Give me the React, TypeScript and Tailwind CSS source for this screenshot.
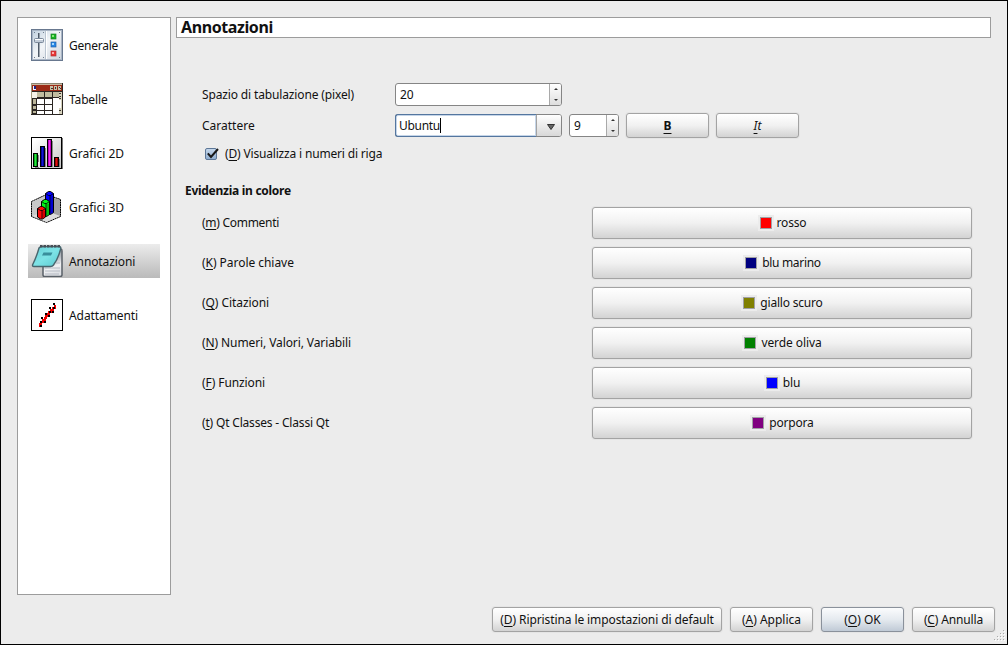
import React, { ReactNode } from 'react';

function GeneralIcon() {
  return (
    <svg width="32" height="32" viewBox="0 0 32 32">
      <defs>
        <linearGradient id="gPanel" x1="0" y1="0" x2="1" y2="1">
          <stop offset="0" stopColor="#c3d2e0" />
          <stop offset=".45" stopColor="#f2f5f8" />
          <stop offset="1" stopColor="#cfd6de" />
        </linearGradient>
      </defs>
      <rect x=".5" y=".5" width="31" height="31" fill="#a9b5c5" stroke="#68788f" />
      <rect x="2" y="2" width="28" height="28" fill="url(#gPanel)" />
      <rect x="15" y="2" width="1" height="28" fill="#fff" />
      <rect x="14" y="2" width="1" height="28" fill="#b9c4d0" />
      <path d="M3 3h1v1H3zM28 3h1v1h-1zM3 28h1v1H3zM28 28h1v1h-1zM12 3h1v1h-1zM12 28h1v1h-1z" fill="#6f7d8d" />
      <rect x="7" y="4" width="1.500" height="24" fill="#4e5a68" />
      <rect x="3.500" y="9.500" width="9" height="4" rx="1" fill="#c2ccd8" stroke="#7b899b" />
      <rect x="4" y="10" width="8" height="1" fill="#fff" />
      <rect x="20" y="5" width="5" height="5" fill="#18b323" stroke="#197b28" strokeWidth=".7" />
      <rect x="21" y="6" width="2" height="2" fill="#86ec78" />
      <rect x="20" y="13" width="5" height="5" fill="#2587e8" stroke="#2462a5" strokeWidth=".7" />
      <rect x="21" y="14" width="2" height="2" fill="#a2d9ff" />
      <rect x="20" y="22" width="5" height="5" fill="#ec3535" stroke="#ad3036" strokeWidth=".7" />
      <rect x="21" y="23" width="2" height="2" fill="#ffaaaa" />
    </svg>
  );
}

function TableIcon() {
  return (
    <svg width="32" height="32" viewBox="0 0 32 32" shapeRendering="crispEdges">
      <rect width="32" height="32" fill="#2a2522" />
      <rect width="31" height="1" fill="#8d8473" />
      <rect y="1" width="31" height="1" fill="#c9b8a1" />
      <rect width="1" height="31" fill="#a09b80" />
      <rect x="1" y="2" width="30" height="6" fill="#9c2b16" />
      <rect x="2" y="3" width="3" height="4" fill="#f4f4ff" />
      <rect x="3" y="3" width="2" height="3" fill="#202080" />
      <path d="M19 3h3v4h-3zM23 3h3v4h-3zM27 3h3v4h-3z" fill="#c5c0a9" />
      <path d="M20 5h2v1h-2zM24 4h1v2h-1zM28 4h1v1h-1zM29 5h1v1h-1z" fill="#40342c" />
      <path d="M1 9h5v6H1z" fill="#f4f3e8" />
      <path d="M6 9h7v5H6zM14 9h7v5h-7zM22 9h6v5h-6z" fill="#c0bc9f" />
      <path d="M2 16h3v5H2zM2 23h3v3H2zM2 28h3v2H2z" fill="#bcb79b" />
      <path d="M6 16h7v5H6zM14 16h7v5h-7zM6 22h7v5H6zM14 22h7v5h-7zM6 28h7v3H6zM14 28h7v3h-7z" fill="#fff" />
      <path d="M22 15h6v16h-6z" fill="#fff" />
      <rect x="28" y="9" width="3" height="22" fill="#d6d2bc" />
      <path d="M28 10h2v1h-2zM28 13h2v1h-2zM28 15h2v1h-2zM28 27h2v1h-2z" fill="#3a352e" />
      <rect x="28" y="17" width="2" height="8" fill="#fff" />
    </svg>
  );
}

function BarsIcon() {
  return (
    <svg width="32" height="32" viewBox="0 0 32 32" shapeRendering="crispEdges">
      <defs>
        <linearGradient id="barsPaper" x1="0" y1="0" x2="1" y2="1">
          <stop offset=".1" stopColor="#fff" />
          <stop offset="1" stopColor="#c5c5c5" />
        </linearGradient>
      </defs>
      <rect x="1" y="1" width="31" height="31" fill="#777" />
      <rect x=".5" y=".5" width="30" height="31" fill="url(#barsPaper)" stroke="#000" />
      <path d="M7 18h1v12H4v1h4zM14 11h1v19h-1zM21 4h1v26h-1zM28 22h1v8h-1z" fill="#888" />
      <path d="M2 16h5v14H2zM9 9h5v21H9zM16 2h5v28h-5zM23 20h5v10h-5z" fill="#000" />
      <path d="M3 17h3v12H3z" fill="#00ad18" />
      <path d="M4 17h1v12H4z" fill="#31df43" />
      <path d="M10 10h3v19h-3z" fill="#00009b" />
      <path d="M11 10h1v19h-1z" fill="#1717d0" />
      <path d="M17 3h3v26h-3z" fill="#bd00bd" />
      <path d="M18 3h1v26h-1z" fill="#f22df2" />
      <path d="M24 21h3v8h-3z" fill="#9d0000" />
      <path d="M25 21h1v8h-1z" fill="#dc1313" />
    </svg>
  );
}

function Prism({ x, top, bottom, light, dark }: { x: number; top: number; bottom: number; light: string; dark: string }) {
  return (
    <g>
      <path d={`M${x} ${top + 2}l3-2h2l3 2v${bottom - top - 4}l-3 2h-2l-3-2z`} fill={light} stroke="#000" />
      <path d={`M${x + 5} ${top + 4.5}h2.500v${bottom - top - 7}l-2.500 1.500z`} fill={dark} />
      <path d={`M${x} ${top + 2}l3 2h2l3-2M${x + 4.5} ${top + 4}v${bottom - top - 4.500}`} fill="none" stroke="#000" strokeWidth=".8" />
    </g>
  );
}

function CubeChartIcon() {
  return (
    <svg width="32" height="32" viewBox="0 0 32 32">
      <path d="M.5 10.500 15.500 3.500 29.500 8.500V25.500L15.500 31.500.5 25.500z" fill="#c4c4c4" stroke="#000" strokeDasharray="2 .4" />
      <path d="M1 11 15 4.500v16L1 25z" fill="#c8c8c8" />
      <path d="M16 5l13 4v16l-13-5z" fill="#a2a2a2" />
      <path d="M1 25l14-5 14 5-13.500 6z" fill="#dcdcdc" />
      <Prism x={14.5} top={0.5} bottom={23.5} light="#0000ff" dark="#0000d0" />
      <Prism x={10.5} top={8.5} bottom={25.5} light="#00f818" dark="#00bd12" />
      <Prism x={6.5} top={15.5} bottom={28} light="#ff0a0a" dark="#d40000" />
    </svg>
  );
}

function NotesIcon() {
  return (
    <svg width="32" height="32" viewBox="0 0 32 32">
      <defs>
        <linearGradient id="notePage" x1="0" y1="0" x2=".3" y2="1">
          <stop offset="0" stopColor="#777e87" />
          <stop offset=".5" stopColor="#b5b9c0" />
          <stop offset=".75" stopColor="#f0f1f3" />
          <stop offset="1" stopColor="#dfe1e5" />
        </linearGradient>
        <linearGradient id="noteCover" x1="0" y1="0" x2="1" y2="1">
          <stop offset="0" stopColor="#65cfd6" />
          <stop offset=".5" stopColor="#7ee3e6" />
          <stop offset="1" stopColor="#58c9d0" />
        </linearGradient>
      </defs>
      <path d="M12 4h18q1 0 1 2v24q0 1.500-2 1.500H13.500q-1.500 0-1.500-1.500z" fill="url(#notePage)" stroke="#596068" strokeWidth="1.500" />
      <path d="M14 23h15M14 26h15M14 29h14M25 18h4" stroke="#b6bbc4" strokeWidth="1" />
      <path d="M8 3Q9 1.500 11 1.500h17q2.500 0 1.500 3Q27 14 22.500 20q-1 1.500-3 1.500H3q-2 0-1.300-2Q5.500 12 8 3z" fill="url(#noteCover)" stroke="#48656d" strokeWidth="1.400" />
      <path d="M12.500 7.500h9l-1.500 3h-9z" fill="#398e9b" />
      <path d="M9 1.300h21" stroke="#484f56" strokeWidth="2.400" strokeDasharray="2.500 1" />
    </svg>
  );
}

function FitIcon() {
  return (
    <svg width="32" height="32" viewBox="0 0 32 32" shapeRendering="crispEdges">
      <rect x=".5" y=".5" width="31" height="31" fill="#fff" stroke="#000" />
      <path d="M8 27h1v-2h1v-2h2v-2h2v-2h1v-2h2v-2h1v-2h2v-2h2v-2h2v-2h1" fill="none" stroke="#f00000" strokeWidth="2" />
      <path d="M9 26h2v2H9zM9 22h2v2H9zM10 18h2v2h-2zM13 22h2v2h-2zM14 14h2v2h-2zM17 16h2v2h-2zM18 12h2v2h-2zM18 8h2v2h-2zM21 12h2v2h-2zM22 4h2v2h-2zM22 8h2v2h-2z" fill="#000" />
    </svg>
  );
}

const categories = [
  { name: 'Generale', icon: <GeneralIcon />, tracking: 'tracking-[-0.25px]' },
  { name: 'Tabelle', icon: <TableIcon />, tracking: 'tracking-[-0.15px]' },
  { name: 'Grafici 2D', icon: <BarsIcon />, tracking: 'tracking-[0px]' },
  { name: 'Grafici 3D', icon: <CubeChartIcon />, tracking: 'tracking-[0px]' },
  { name: 'Annotazioni', icon: <NotesIcon />, tracking: 'tracking-[-0.1px]', selected: true },
  { name: 'Adattamenti', icon: <FitIcon />, tracking: 'tracking-[-0.08px]' },
];

const highlights = [
  { k: 'm', label: 'Commenti', color: 'bg-[#ff0000]', value: 'rosso', tl: 'tracking-[-0.28px]', tv: 'tracking-[-0.15px]' },
  { k: 'K', label: 'Parole chiave', color: 'bg-[#000080]', value: 'blu marino', tl: 'tracking-[-0.04px]', tv: 'tracking-[-0.3px]' },
  { k: 'Q', label: 'Citazioni', color: 'bg-[#808000]', value: 'giallo scuro', tl: 'tracking-[-0.07px]', tv: 'tracking-[-0.2px]' },
  { k: 'N', label: 'Numeri, Valori, Variabili', color: 'bg-[#008000]', value: 'verde oliva', tl: 'tracking-[-0.1px]', tv: 'tracking-[-0.08px]' },
  { k: 'F', label: 'Funzioni', color: 'bg-[#0000ff]', value: 'blu', tl: 'tracking-[-0.12px]', tv: 'tracking-[-0.2px]' },
  { k: 't', label: 'Qt Classes - Classi Qt', color: 'bg-[#800080]', value: 'porpora', tl: 'tracking-[-0.18px]', tv: 'tracking-[-0.2px]' },
];

function Key({ children }: { children: ReactNode }) {
  return <>(<span className="underline decoration-1 underline-offset-2">{children}</span>) </>;
}

function Button({ className = '', primary = false, children }: { className?: string; primary?: boolean; children: ReactNode }) {
  const tone = primary
    ? 'border-[#8a919b] bg-linear-to-b from-[#fbfcfd] via-[#e5eaef] to-[#c0cad6]'
    : 'border-[#a3a3a3] bg-linear-to-b from-white via-[#f1f1f1] to-[#d3d3d3]';
  return (
    <button className={`flex items-center justify-center whitespace-nowrap rounded-[3px] border shadow-[0_0_0_1px_#e5e5e5] ${tone} ${className}`}>
      {children}
    </button>
  );
}

function Stepper() {
  return (
    <span className="flex w-[12px] flex-col items-center justify-between rounded-r-[2px] border-l border-[#a9a9a9] bg-linear-to-b from-white to-[#dedede] py-[4px]">
      <svg width="4" height="2" viewBox="0 0 4 2"><path d="M0 2 2 0l2 2z" fill="#333" /></svg>
      <svg width="4" height="2" viewBox="0 0 4 2"><path d="M0 0l2 2 2-2z" fill="#333" /></svg>
    </span>
  );
}

export default function App() {
  return (
    <div className="relative flex h-[645px] w-[1008px] flex-col border border-black bg-[#ececec] pl-4 pt-4 font-['Noto_Sans','Liberation_Sans',sans-serif] text-[12px] leading-4 text-[#111]">
      <div className="flex gap-[5px]">
        <nav className="flex h-[578px] w-[154px] flex-col gap-5 border border-[#9c9c9c] bg-white pl-[10px] pr-[10px] pt-[10px]">
          {categories.map((c) => (
            <div key={c.name} className={`flex h-[34px] items-center gap-[6px] pl-[3px] ${c.selected ? 'bg-linear-to-b from-[#ececec] to-[#bababa]' : ''}`}>
              {c.icon}
              <span className={`pt-[2px] ${c.tracking}`}>{c.name}</span>
            </div>
          ))}
        </nav>

        <main className="w-[815px]">
          <h1 className="h-[21px] border border-[#9c9c9c] bg-white pl-1 text-[16px] font-bold leading-[19px] tracking-[-0.4px]">Annotazioni</h1>

          <div className="mt-[45px] flex h-[23px] items-center pl-[26px]">
            <span className="w-[193px] tracking-[-0.14px]">Spazio di tabulazione (pixel)</span>
            <div className="flex h-[23px] w-[167px] rounded-[3px] border border-[#858585] bg-white">
              <span className="flex flex-1 items-center pl-1">20</span>
              <Stepper />
            </div>
          </div>

          <div className="mt-[7px] flex h-[25px] items-center pl-[26px]">
            <span className="w-[193px]">Carattere</span>
            <div className="flex h-[23px] w-[167px] rounded-[3px] border border-[#858585] bg-white">
              <div className="-m-px mr-0 flex w-[141px] items-center rounded-l-[3px] border border-r-0 border-[#54769f] pl-[3px] shadow-[inset_0_0_0_1px_#c5d5e8]">
                <span className="tracking-[-0.3px]">Ubuntu</span>
                <span className="h-[15px] w-px bg-black" />
              </div>
              <span className="flex flex-1 items-center justify-center rounded-r-[2px] border-l border-[#a3a3a3] bg-linear-to-b from-white to-[#d8d8d8] pl-[3px] pt-[3px]">
                <svg width="8" height="6" viewBox="0 0 8 6"><path d="M.5.5h7L4 5.500z" fill="#666" stroke="#333" /></svg>
              </span>
            </div>
            <div className="ml-[7px] flex h-[23px] w-[50px] rounded-[3px] border border-[#858585] bg-white">
              <span className="flex flex-1 items-center pl-1">9</span>
              <Stepper />
            </div>
            <Button className="ml-[7px] h-[25px] w-[83px] font-bold"><span className="underline decoration-1 underline-offset-[3px]">B</span></Button>
            <Button className="ml-[7px] h-[25px] w-[83px] italic"><span><span className="underline decoration-1 underline-offset-[3px]">I</span>t</span></Button>
          </div>

          <label className="mt-[8px] flex h-4 items-center pl-[29px]">
            <svg className="mb-[2px]" width="15" height="15" viewBox="0 0 15 15">
              <defs>
                <linearGradient id="check" x1="0" y1="0" x2="0" y2="1">
                  <stop offset="0" stopColor="#c6d8ec" />
                  <stop offset="1" stopColor="#8fadd0" />
                </linearGradient>
              </defs>
              <rect x=".5" y="2.500" width="11" height="11" rx="1.500" fill="url(#check)" stroke="#5d7797" />
              <path d="M2.800 7.300l3.200 3.700L13 3" fill="none" stroke="#181818" strokeWidth="2" />
            </svg>
            <span className="ml-[5px] tracking-[-0.17px]"><Key>D</Key>Visualizza i numeri di riga</span>
          </label>

          <h2 className="mt-[21px] pl-[9px] text-[12px] font-bold leading-4 tracking-[-0.28px]">Evidenzia in colore</h2>

          <div className="mt-[8px] flex flex-col gap-2">
            {highlights.map((h) => (
              <div key={h.k} className="flex h-8 items-center pl-[26px]">
                <span className={`w-[390px] ${h.tl}`}><Key>{h.k}</Key>{h.label}</span>
                <Button className="h-8 w-[380px] gap-[3px]">
                  <span className="flex h-4 w-4 items-center justify-center bg-[#ececec]">
                    <span className={`h-3 w-3 border border-[#a0a0a4] ${h.color}`} />
                  </span>
                  <span className={h.tv}>{h.value}</span>
                </Button>
              </div>
            ))}
          </div>
        </main>
      </div>

      <footer className="mt-3 flex justify-end gap-2 pr-3">
        <Button className="h-[25px] w-[230px] tracking-[-0.1px]"><span><Key>D</Key>Ripristina le impostazioni di default</span></Button>
        <Button className="h-[25px] w-[83px]"><span><Key>A</Key>Applica</span></Button>
        <Button primary className="h-[25px] w-[83px]"><span><Key>O</Key>OK</span></Button>
        <Button className="h-[25px] w-[83px] tracking-[-0.14px]"><span><Key>C</Key>Annulla</span></Button>
      </footer>

      <svg className="absolute bottom-[3px] right-[2px]" width="11" height="11" viewBox="0 0 11 11" shapeRendering="crispEdges">
        <path d="M9 0h1v1H9zM9 3h1v1H9zM6 3h1v1H6zM9 6h1v1H9zM6 6h1v1H6zM3 6h1v1H3zM9 9h1v1H9zM6 9h1v1H6zM3 9h1v1H3zM0 9h1v1H0z" fill="#aaa" />
        <path d="M10 1h1v1h-1zM10 4h1v1h-1zM7 4h1v1H7zM10 7h1v1h-1zM7 7h1v1H7zM4 7h1v1H4zM10 10h1v1h-1zM7 10h1v1H7zM4 10h1v1H4zM1 10h1v1H1z" fill="#fff" />
      </svg>
    </div>
  );
}
